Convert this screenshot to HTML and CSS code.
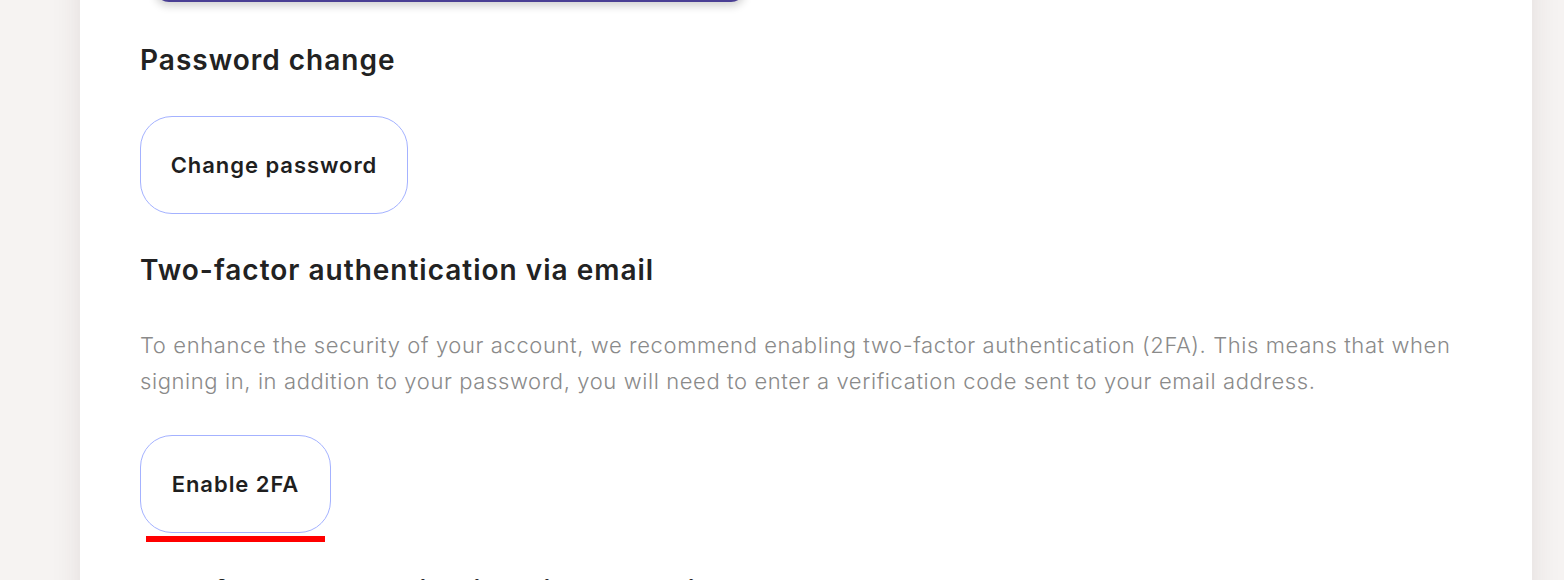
FILE: index.html
```html
<!DOCTYPE html>
<html lang="en">
<head>
<meta charset="utf-8">
<title>Security settings</title>
<link rel="stylesheet" href="styles.css">
</head>
<body>
<div class="page">
  <main class="card">
    <div class="top-btn"></div>
    <section class="section">
      <h2 class="title">Password change</h2>
      <button class="btn btn-pass">Change password</button>
    </section>
    <section class="section">
      <h2 class="title">Two-factor authentication via email</h2>
      <p class="desc">To enhance the security of your account, we recommend enabling two-factor authentication (2FA). This means that when signing in, in addition to your password, you will need to enter a verification code sent to your email address.</p>
      <div class="btn-wrap">
        <button class="btn btn-2fa">Enable 2FA</button>
        <span class="mark"></span>
      </div>
    </section>
    <section class="section">
      <h2 class="title">Two-factor authentication via authenticator app</h2>
    </section>
  </main>
</div>
</body>
</html>
```
FILE: styles.css
```css
html, body {
  margin: 0;
  padding: 0;
  background: #f6f3f2;
  height: 580px;
  overflow: hidden;
}
body {
  font-family: "Inter", "Liberation Sans", sans-serif;
  color: #222222;
}
.page {
  padding: 0 32px 0 80px;
}
.card {
  background: #ffffff;
  padding: 0 60px 40px 60px;
  box-shadow: 0 0 28px rgba(60, 40, 40, 0.10);
  min-height: 700px;
}
.top-btn {
  margin: -60px 0 0 15px;
  width: 590px;
  height: 62px;
  border-radius: 14px;
  background: #4a3f94;
  box-shadow: 0 4px 8px rgba(0, 0, 0, 0.18);
}
.section {
  display: flex;
  flex-direction: column;
  align-items: flex-start;
}
.title {
  margin: 0;
  font-size: 28px;
  font-weight: 600;
  line-height: 36px;
  letter-spacing: 1px;
}
.section:nth-child(2) .title { margin-top: 40px; }
.section:nth-child(3) .title { margin-top: 38px; }
.section:nth-child(4) .title { margin-top: 31px; }
.btn {
  font-family: inherit;
  font-size: 22px;
  font-weight: 600;
  letter-spacing: 0.95px;
  color: #1f1f1f;
  background: #ffffff;
  border: 1px solid #a4b2ff;
  border-radius: 32px;
  height: 98px;
  padding: 0;
  cursor: pointer;
}
.btn-pass {
  margin-top: 38px;
  width: 268px;
}
.btn-2fa {
  width: 191px;
}
.desc {
  margin: 39px 0 0 0;
  font-size: 22px;
  font-weight: 300;
  line-height: 36px;
  letter-spacing: 0.6px;
  color: #8a8a8a;
}
.btn-wrap {
  margin-top: 36px;
  display: flex;
  flex-direction: column;
}
.mark {
  display: block;
  margin: 3px 6px 0 6px;
  height: 6px;
  background: #ff0000;
}
```
